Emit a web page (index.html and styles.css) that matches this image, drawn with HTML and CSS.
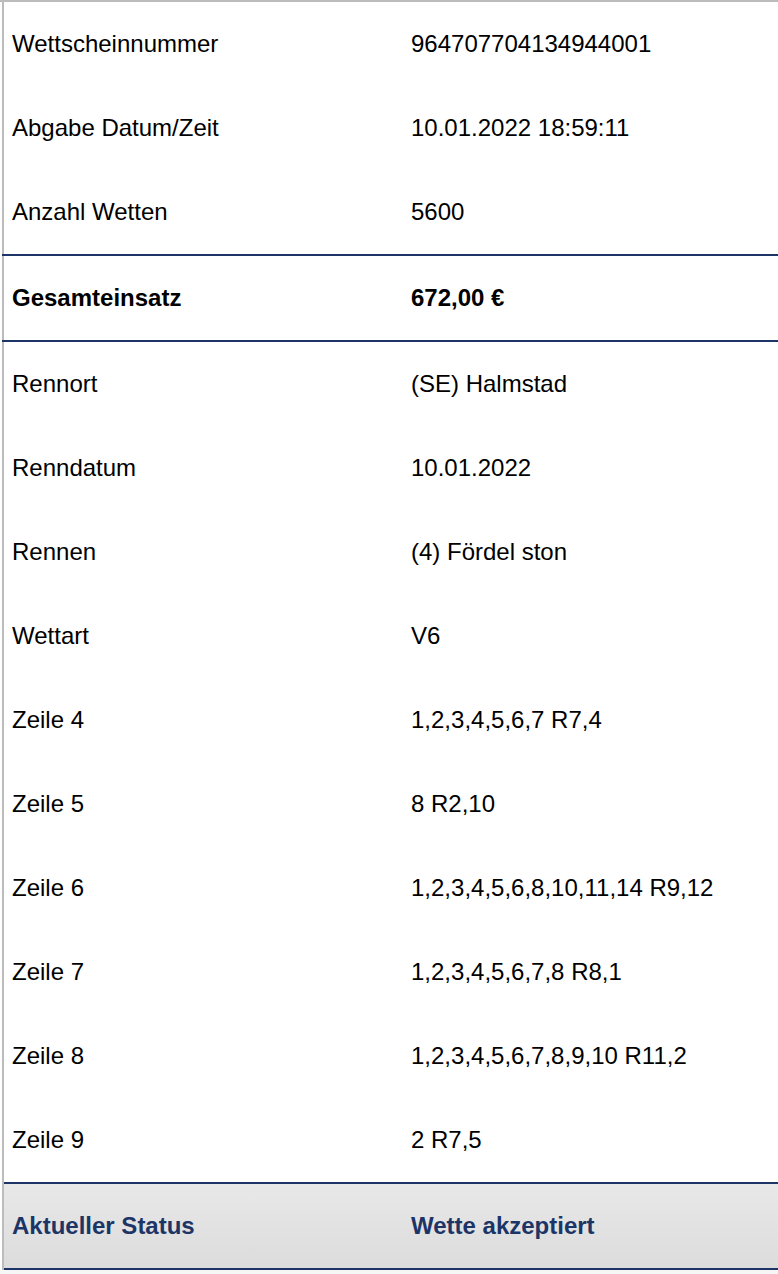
FILE: index.html
```html
<!DOCTYPE html>
<html lang="de">
<head>
<meta charset="utf-8">
<title>Wettschein</title>
<link rel="stylesheet" href="styles.css">
</head>
<body>
<div class="page">
  <div class="ticket">
    <div class="row"><div class="label">Wettscheinnummer</div><div class="value">964707704134944001</div></div>
    <div class="row"><div class="label">Abgabe Datum/Zeit</div><div class="value">10.01.2022 18:59:11</div></div>
    <div class="row"><div class="label">Anzahl Wetten</div><div class="value">5600</div></div>
    <div class="row total"><div class="label">Gesamteinsatz</div><div class="value">672,00 €</div></div>
    <div class="row"><div class="label">Rennort</div><div class="value">(SE) Halmstad</div></div>
    <div class="row"><div class="label">Renndatum</div><div class="value">10.01.2022</div></div>
    <div class="row"><div class="label">Rennen</div><div class="value">(4) Fördel ston</div></div>
    <div class="row"><div class="label">Wettart</div><div class="value">V6</div></div>
    <div class="row"><div class="label">Zeile 4</div><div class="value">1,2,3,4,5,6,7 R7,4</div></div>
    <div class="row"><div class="label">Zeile 5</div><div class="value">8 R2,10</div></div>
    <div class="row"><div class="label">Zeile 6</div><div class="value">1,2,3,4,5,6,8,10,11,14 R9,12</div></div>
    <div class="row"><div class="label">Zeile 7</div><div class="value">1,2,3,4,5,6,7,8 R8,1</div></div>
    <div class="row"><div class="label">Zeile 8</div><div class="value">1,2,3,4,5,6,7,8,9,10 R11,2</div></div>
    <div class="row"><div class="label">Zeile 9</div><div class="value">2 R7,5</div></div>
    <div class="row status"><div class="label">Aktueller Status</div><div class="value">Wette akzeptiert</div></div>
  </div>
  <div class="after"></div>
</div>
</body>
</html>
```
FILE: styles.css
```css
html, body {
  margin: 0;
  padding: 0;
  background: #ffffff;
}
body {
  font-family: "Liberation Sans", Arial, Helvetica, sans-serif;
  font-size: 24px;
  color: #000000;
}
.page {
  border-top: 2px solid #bcbcbc;
}
.ticket {
  margin-left: 2px;
  border-left: 2px solid #bcbcbc;
}
.row {
  display: grid;
  grid-template-columns: 399px 1fr;
  height: 84px;
  align-items: center;
}
.label, .value {
  padding-left: 8px;
  white-space: nowrap;
}
.total {
  border-top: 2px solid #1c3566;
  border-bottom: 2px solid #1c3566;
  font-weight: bold;
  margin-left: -2px;
  padding-left: 2px;
}
.status {
  border-top: 2px solid #1c3566;
  border-bottom: 2px solid #1c3566;
  font-weight: bold;
  color: #1c3566;
  background: linear-gradient(to bottom, #e8e8e8, #dcdcdc);
}
.after {
  height: 4px;
  background: #f6f6f6;
}
```
